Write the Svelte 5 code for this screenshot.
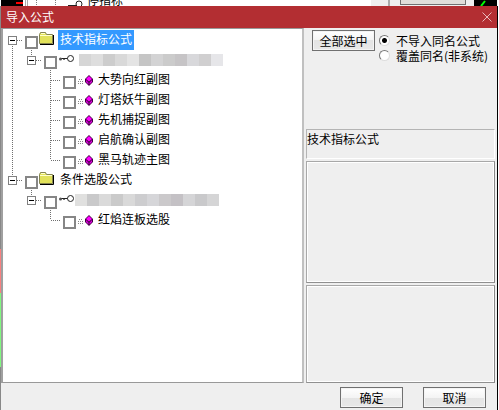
<script>
	// guides: one cell per tree column, left to right
	const rows = [
		{ guides: ['first'], icon: 'folder', label: '技术指标公式', selected: true, parent: true },
		{ guides: ['line', 'last'], icon: 'key', blocks: 'a', parent: true },
		{ guides: ['line', 'blank', 'tee'], icon: 'formula', label: '大势向红副图' },
		{ guides: ['line', 'blank', 'tee'], icon: 'formula', label: '灯塔妖牛副图' },
		{ guides: ['line', 'blank', 'tee'], icon: 'formula', label: '先机捕捉副图' },
		{ guides: ['line', 'blank', 'tee'], icon: 'formula', label: '启航确认副图' },
		{ guides: ['line', 'blank', 'last'], icon: 'formula', label: '黑马轨迹主图' },
		{ guides: ['last'], icon: 'folder', label: '条件选股公式', parent: true },
		{ guides: ['blank', 'last'], icon: 'key', blocks: 'b', parent: true },
		{ guides: ['blank', 'blank', 'last'], icon: 'formula', label: '红焰连板选股' }
	];

	const masks = {
		a: ['#d6d6d6', '#dedede', '#cdcdcd', '#d9d9d9', '#e4e4e4', '#c5c5c5', '#d3d3d4', '#cbcbcb', '#c6c4c6', '#d8d8db', '#d0cfd0', '#e6e6e9'],
		b: ['#e0e0df', '#c9c9ca', '#dadada', '#cacaca', '#d9d9d9', '#cdcdcf', '#d6d6d9', '#cbc9cb', '#c4c1c5', '#d5d5d7', '#c9c9cb', '#d5d5d6']
	};

	const linePaths = {
		first: 'M9.5 10v10',
		line: 'M9.5 0v20',
		tee: 'M9.5 0v20',
		last: 'M9.5 0v10'
	};

	let checked = $state(rows.map(() => false));
	let mode = $state('skip');

	function selectAll() {
		checked = rows.map(() => true);
	}
</script>

<div class="screen">
	<div class="behind">
		<svg width="86" height="6" viewBox="0 0 86 6">
			<path d="M1 0h22v6H1z" />
			<path d="M16 2h7v2h-7z" fill="#f00" />
			<path d="M25.5 0v6M27.5 0v6" stroke="#aaa" />
			<path d="M36.5 0v6M55.5 0v6" stroke="#808080" stroke-dasharray="1 1" />
			<path d="M68 5.5h8" stroke="#222" />
			<circle cx="79" cy="4" r="3" fill="#fff" stroke="#222" />
		</svg>
		<span class="peek">停指标</span>
		<span class="pane"></span>
		<span class="pane wide"><i></i></span>
		<svg width="25" height="6" viewBox="0 0 25 6">
			<path d="M0 0h23v6H0z" />
			<path d="M7 6l4-5" stroke="#0f0" stroke-width="2" />
		</svg>
	</div>
	<div class="middle">
		<div class="edge"></div>
		<form class="dialog" onsubmit={(e) => e.preventDefault()}>
			<header>
				<h1>导入公式</h1>
				<button type="button" class="close" aria-label="关闭">
					<svg width="10" height="10" viewBox="0 0 10 10">
						<path d="M.5 .5l9 9M9.5 .5l-9 9" stroke="#e8b9ba" fill="none" />
					</svg>
				</button>
			</header>
			<div class="content">
				<ul class="tree">
					{#each rows as row, i}
						<li>
							{#each row.guides as guide, g}
								<svg class="guide" width="19" height="20" viewBox="0 0 19 20">
									{#if guide !== 'blank'}
										<path d={linePaths[guide]} stroke="#707070" stroke-dasharray="1 1" />
									{/if}
									{#if guide !== 'blank' && guide !== 'line'}
										<path d="M10 10.5h{row.parent ? 9 : 11}" stroke="#707070" stroke-dasharray="1 1" />
									{/if}
									{#if row.parent && g === row.guides.length - 1}
										<rect x="5.5" y="6.5" width="8" height="8" fill="#fff" stroke="#808080" />
										<path d="M7 10.5h5" stroke="#000" />
									{/if}
								</svg>
							{/each}
							<input type="checkbox" id="row-{i}" aria-label={row.label ?? '公式组'} bind:checked={checked[i]} />
							{#if row.icon === 'folder'}
								<svg class="icon" width="18" height="16" viewBox="0 0 18 16">
									<path d="M2 13.500h13.500V4" stroke="#000" fill="none" />
									<path d="M1.500 12.500v-9l1-2h5l1 2h6v9z" fill="#e2e25a" stroke="#848450" />
									<path d="M2 4.500h12M3 2.500h4" stroke="#ffffd0" />
								</svg>
							{:else if row.icon === 'key'}
								<svg class="icon" width="18" height="16" viewBox="0 0 18 16">
									<path d="M4 7.500h7" stroke="#222" />
									<circle cx="3.500" cy="8" r="1.500" fill="#555" />
									<path d="M6 8.500h2" stroke="#777" />
									<circle cx="13.500" cy="7.500" r="3" fill="#fff" stroke="#222" />
								</svg>
							{:else}
								<svg class="icon" width="18" height="16" viewBox="0 0 18 16">
									<path d="M3 8.500h4M2 10.500h6M2 12.500h6" stroke="#888" stroke-dasharray="1 1" />
									<path d="M13 4l4 4v3l-4 4-4-4V8z" fill="#400040" />
									<path d="M13 5l3 3-3 2.500L10 8z" fill="#f0f" />
									<path d="M10 9l2.500 2.500v2L10 11zM16 9l-2.500 2.500v2L16 11z" fill="#e000e0" />
								</svg>
							{/if}
							{#if row.blocks}
								<span class="mask {row.blocks}">
									{#each masks[row.blocks] as color}
										<i style="background: {color}"></i>
									{/each}
								</span>
							{:else}
								<label for="row-{i}" class:selected={row.selected}>{row.label}</label>
							{/if}
						</li>
					{/each}
				</ul>
				<div class="side">
					<div class="options">
						<button type="button" onclick={selectAll}>全部选中</button>
						<div class="modes">
							<label><input type="radio" name="mode" value="skip" bind:group={mode} />不导入同名公式</label>
							<label><input type="radio" name="mode" value="replace" bind:group={mode} />覆盖同名(非系统)</label>
						</div>
					</div>
					<div class="name">技术指标公式</div>
					<div class="panel"></div>
					<div class="panel last"></div>
				</div>
			</div>
			<footer>
				<button type="submit">确定</button>
				<button type="button">取消</button>
			</footer>
		</form>
		<div class="edge right"></div>
	</div>
</div>

<style>
	:global(body) {
		background: #efefef;
	}
	.screen {
		font: 12px/16px 'Noto Sans CJK SC', sans-serif;
		color: #000;
	}
	.behind {
		display: flex;
		height: 6px;
		overflow: hidden;
		background: #fff;
	}
	.behind svg {
		flex: none;
	}
	.peek {
		display: flex;
		flex: 1;
		align-items: flex-end;
		height: 8px;
		padding-left: 1px;
	}
	.pane {
		width: 17px;
		background: #efefef;
		border-right: 2px solid #aaa;
	}
	.pane.wide {
		box-sizing: border-box;
		width: 84px;
		padding: 0 8px 0 10px;
		border: 0;
	}
	.pane i {
		display: block;
		height: 4px;
		background: #e0ddd9;
		border: 1px solid #707070;
		border-top: 0;
	}
	.middle {
		display: flex;
	}
	.edge {
		width: 1px;
		background: linear-gradient(#888 243px, #f88080 243px 287px, #80f880 287px 361px, #888 361px);
	}
	.edge.right {
		background: #000;
		border-right: 1px solid #fff;
	}
	.dialog {
		flex: 1;
		min-width: 0;
		background: #efefef;
	}
	header {
		display: flex;
		align-items: center;
		justify-content: space-between;
		height: 22px;
		padding: 0 5px;
		background: #b32e32;
		color: #fff;
	}
	h1 {
		margin: 0;
		font-size: 12px;
		line-height: 16px;
		font-weight: 400;
	}
	button {
		box-sizing: border-box;
		width: 63px;
		height: 21px;
		padding: 0;
		border: 1px solid #707070;
		background: linear-gradient(#fff, #f4f4f4 50%, #e4e4e4 50%, #e8e8e8);
		box-shadow: inset 0 0 0 1px #f4f4f4;
		font: inherit;
		line-height: 18px;
		color: #000;
	}
	.close {
		display: flex;
		width: 10px;
		height: 10px;
		border: 0;
		background: none;
		box-shadow: none;
	}
	.content {
		display: flex;
	}
	.tree {
		box-sizing: border-box;
		flex: 1;
		min-width: 0;
		margin: 0;
		padding: 1px 0 0;
		list-style: none;
		background: #fff;
		border: 1px solid #999;
		border-left: 2px solid #a0a0a0;
		border-right: 2px solid #c0c0c0;
	}
	li {
		display: flex;
		height: 20px;
		align-items: center;
	}
	.guide,
	.icon {
		flex: none;
	}
	.icon {
		margin-bottom: 2px;
	}
	input[type='checkbox'] {
		appearance: none;
		box-sizing: border-box;
		flex: none;
		width: 13px;
		height: 13px;
		margin: 5px 0 0 3px;
		border: 2px solid #868686;
		background: #fff;
	}
	input[type='checkbox']:checked {
		background: #868686;
	}
	li label {
		margin-left: 2px;
		padding: 0 2px 2px;
		line-height: 18px;
	}
	.selected {
		background: #3399ff;
		color: #fff;
	}
	.mask {
		display: flex;
		margin-left: 4px;
	}
	.mask.b {
		margin-left: 0;
	}
	.mask i {
		width: 12px;
		height: 12px;
	}
	.side {
		display: flex;
		flex-direction: column;
		width: 193px;
		padding: 0 2px;
		box-sizing: border-box;
	}
	.options {
		display: flex;
		gap: 4px;
		height: 99px;
		padding: 2px 0 0 6px;
	}
	.modes {
		display: flex;
		flex-direction: column;
		padding-top: 3px;
	}
	.modes label {
		display: flex;
		align-items: center;
		gap: 6px;
		height: 15px;
		line-height: 15px;
		white-space: nowrap;
	}
	input[type='radio'] {
		appearance: none;
		box-sizing: border-box;
		width: 11px;
		height: 11px;
		margin: 0;
		border: 1px solid;
		border-color: #777 #ddd #ddd #777;
		border-radius: 50%;
		background: #fff;
	}
	input[type='radio']:checked {
		background: radial-gradient(circle, #000 2px, #fff 3px);
	}
	.name,
	.panel {
		box-sizing: border-box;
		border: 1px solid #b4b4b4;
	}
	.name {
		height: 30px;
		margin-bottom: 2px;
		padding-top: 1px;
		border-color: #b4b4b4 #fff #fff #b4b4b4;
	}
	.panel {
		height: 122px;
		margin-bottom: 2px;
		border-color: #a8a8a8 #888 #909090 #a8a8a8;
		box-shadow: inset 0 0 0 1px #fff;
	}
	.panel.last {
		height: 98px;
		margin-bottom: 0;
	}
	footer {
		display: flex;
		justify-content: flex-end;
		gap: 20px;
		padding: 4px 11px 2px 0;
	}
</style>
